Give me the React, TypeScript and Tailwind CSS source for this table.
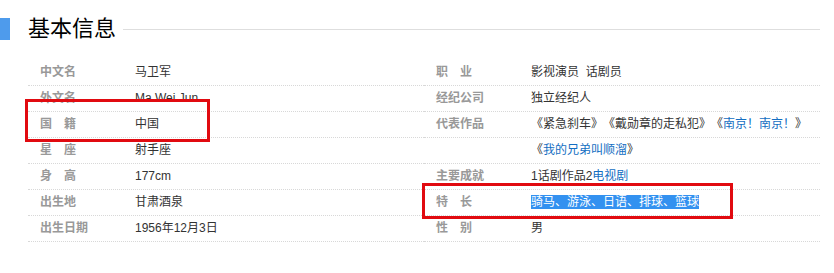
const font = { fontFamily: '"Liberation Sans", Arial, "Noto Sans CJK SC", sans-serif' };

type Row = { label: string; value: React.ReactNode };

// book-title brackets held at full width
function L() {
  return <span className="inline-block w-[12px] text-right">《</span>;
}
function R() {
  return <span className="inline-block w-[12px] text-left">》</span>;
}

const leftRows: Row[] = [
  { label: "中文名", value: "马卫军" },
  { label: "外文名", value: "Ma Wei Jun" },
  { label: "国\u3000籍", value: "中国" },
  { label: "星\u3000座", value: "射手座" },
  { label: "身\u3000高", value: "177cm" },
  { label: "出生地", value: "甘肃酒泉" },
  { label: "出生日期", value: "1956年12月3日" },
];

const rightRows: Row[] = [
  { label: "职\u3000业", value: "影视演员\u00a0\u00a0话剧员" },
  { label: "经纪公司", value: "独立经纪人" },
  {
    label: "代表作品",
    value: (
      <>
        <L />紧急刹车<R />
        <L />戴勋章的走私犯<R />
        <L />
        <span className="text-[#136ec2]">南京！南京！</span>
        <R />
      </>
    ),
  },
  {
    label: "",
    value: (
      <>
        <L />
        <span className="text-[#136ec2]">我的兄弟叫顺溜</span>
        <R />
      </>
    ),
  },
  {
    label: "主要成就",
    value: (
      <>
        1话剧作品2<span className="text-[#136ec2]">电视剧</span>
      </>
    ),
  },
  {
    label: "特\u3000长",
    value: <span className="bg-[#3391f0] text-white">骑马、游泳、日语、排球、篮球</span>,
  },
  { label: "性\u3000别", value: "男" },
];

function InfoColumn({ rows }: { rows: Row[] }) {
  return (
    <div className="flex flex-col">
      {rows.map((r, i) => (
        <div key={i} className="flex h-[26px] border-b border-dotted border-[#d8d8d8] text-[12px] leading-[25px]">
          <div className="w-[107px] shrink-0 pl-[12px] font-bold text-[#999999] whitespace-nowrap">{r.label}</div>
          <div className="flex-1 text-[#333333] whitespace-nowrap">{r.value}</div>
        </div>
      ))}
    </div>
  );
}

export default function App() {
  return (
    <div className="relative w-[834px] h-[273px] bg-white overflow-hidden" style={font}>
      {/* heading */}
      <div className="flex items-center mt-[18px] h-[22px]">
        <div className="w-[10px] h-[22px] bg-[#4e9bec]" />
        <h2 className="ml-[18px] text-[22px] leading-[22px] text-black">基本信息</h2>
        <div className="flex-1 ml-[7px] mr-[14px] h-px bg-[#dedede]" />
      </div>

      {/* table */}
      <div className="grid grid-cols-2 ml-[28px] w-[792px] mt-[20px]">
        <InfoColumn rows={leftRows} />
        <InfoColumn rows={rightRows} />
      </div>

      {/* annotation boxes */}
      <div className="absolute left-[25px] top-[99px] w-[185px] h-[43px] border-[3px] border-[#e10a10]" />
      <div className="absolute left-[422px] top-[183px] w-[311px] h-[36px] border-[3px] border-[#e10a10]" />
    </div>
  );
}
